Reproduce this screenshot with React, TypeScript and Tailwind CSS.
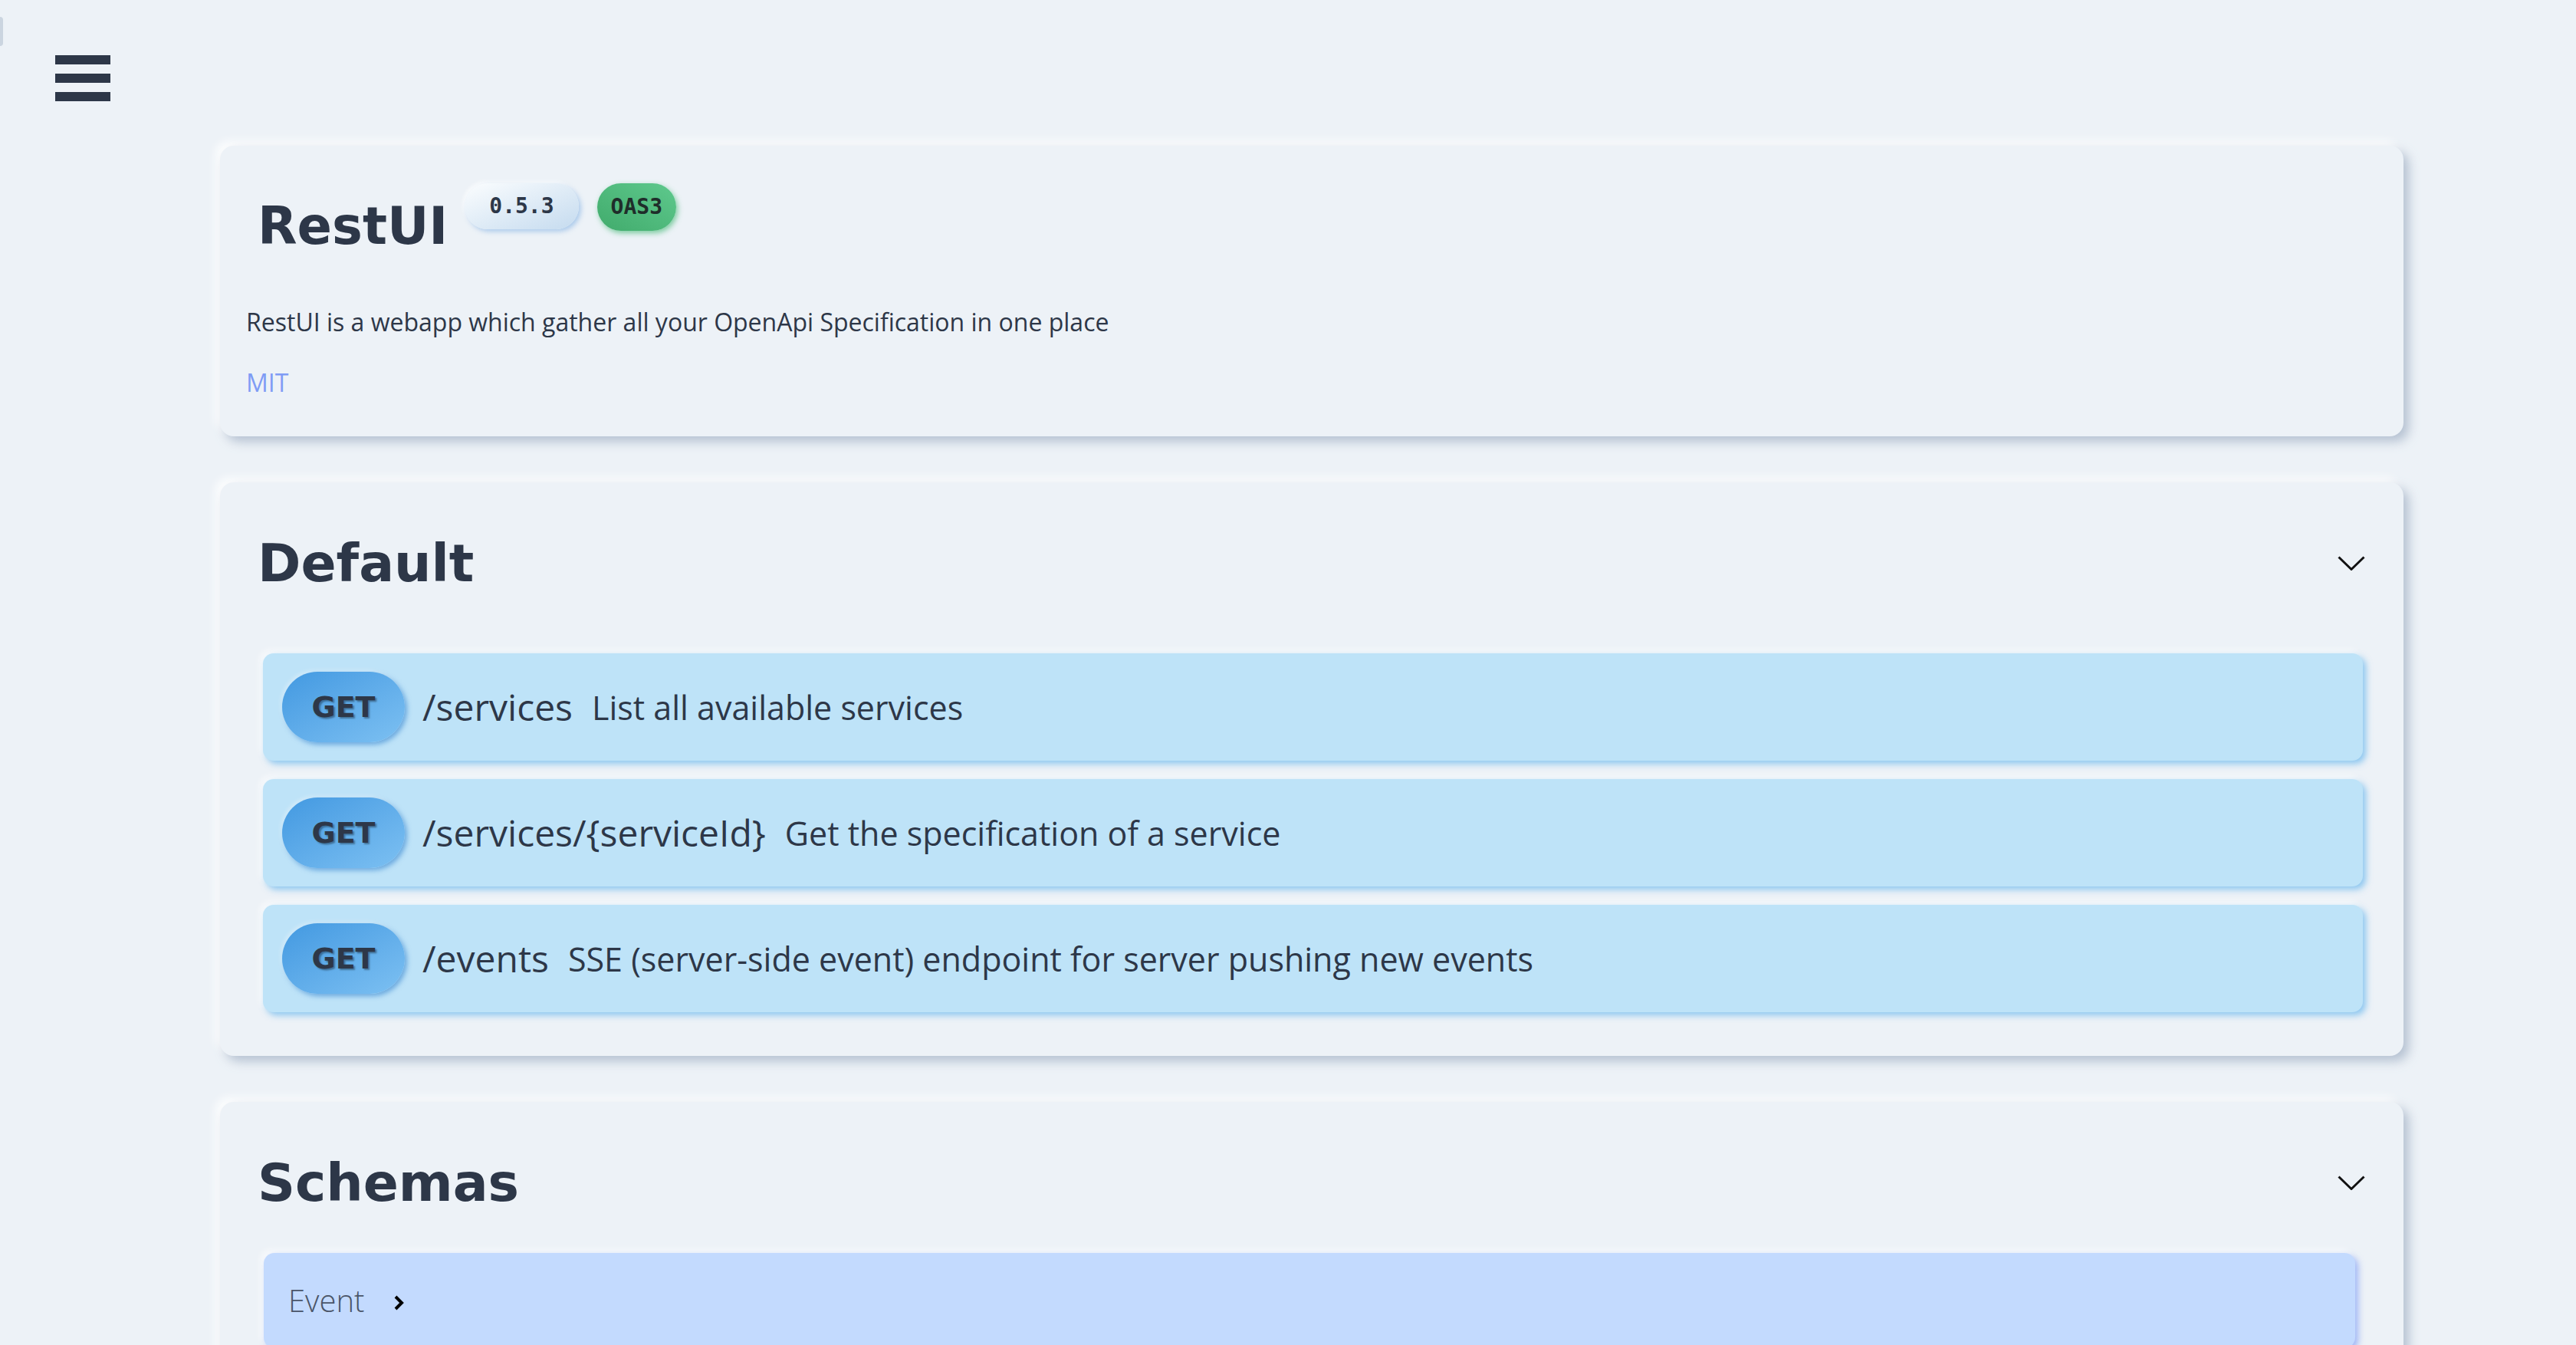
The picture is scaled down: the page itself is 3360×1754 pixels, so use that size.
import React from 'react';

const ENDPOINTS = [
  { method: 'GET', path: '/services', summary: 'List all available services' },
  { method: 'GET', path: '/services/{serviceId}', summary: 'Get the specification of a service' },
  {
    method: 'GET',
    path: '/events',
    summary: 'SSE (server-side event) endpoint for server pushing new events',
  },
];

const SCHEMAS = ['Event'];

const cardClass =
  "rounded-[18px] bg-[#edf2f7] shadow-[7px_7px_14px_rgba(163,177,198,0.75),-6px_-6px_12px_rgba(255,255,255,0.9)]";

function ChevronDown() {
  return (
    <svg width="36" height="20" viewBox="0 0 36 20" fill="none">
      <polyline points="1.5,1.5 18,17.5 34.5,1.5" stroke="#111" strokeWidth="3" strokeLinejoin="round" />
    </svg>
  );
}

function ChevronRight() {
  return (
    <svg width="14" height="20" viewBox="0 0 14 20" fill="none">
      <polyline points="3,2 11,10 3,18" stroke="#000" strokeWidth="4" />
    </svg>
  );
}

function MenuIcon() {
  return (
    <svg width="72" height="60" viewBox="0 0 72 60" fill="#2d3748">
      <rect x="0" y="0" width="72" height="12" />
      <rect x="0" y="24" width="72" height="12" />
      <rect x="0" y="48" width="72" height="12" />
    </svg>
  );
}

function SectionHeader({ title }: { title: string }) {
  return (
    <div className="flex items-center justify-between">
      <h2 className="font-['DejaVu_Sans',sans-serif] text-[68px] font-bold leading-none">{title}</h2>
      <ChevronDown />
    </div>
  );
}

function EndpointRow({ method, path, summary }: { method: string; path: string; summary: string }) {
  return (
    <div className="flex h-[140px] items-center rounded-[14px] bg-[#bee3f8] pl-[25px] shadow-[4px_4px_8px_rgba(99,179,237,0.7),-4px_-4px_8px_rgba(255,255,255,0.7)]">
      <span className="flex h-[92px] w-[160px] shrink-0 items-center justify-center rounded-full bg-gradient-to-br from-[#4299e1] to-[#7cc0f2] font-['DejaVu_Sans',sans-serif] text-[38px] font-bold shadow-[3px_3px_6px_rgba(49,130,206,0.6),-2px_-2px_5px_rgba(255,255,255,0.4)] [text-shadow:2px_2px_2px_rgba(0,0,0,0.35)]">
        {method}
      </span>
      <span className="ml-[23px] text-[48px] leading-none">{path}</span>
      <span className="ml-[25px] text-[43px] leading-none">{summary}</span>
    </div>
  );
}

export default function App() {
  return (
    <div className="relative min-h-screen overflow-hidden bg-[#edf2f7] font-['Open_Sans',sans-serif] text-[#2d3748]">
      <div className="absolute left-0 top-[22px] h-[38px] w-[4px] rounded-r-full bg-[#cbd5e0]" />

      <div className="pl-[72px] pt-[72px]">
        <button className="block">
          <MenuIcon />
        </button>
      </div>

      <main className="ml-[287px] mt-[58px] flex w-[2848px] flex-col gap-[60px] pb-[60px]">
        {/* info */}
        <section className={`${cardClass} px-[34px] pb-[46px] pt-[49px]`}>
          <div className="flex items-start">
            <h1 className="ml-[15px] mt-[23px] font-['DejaVu_Sans',sans-serif] text-[67px] font-bold leading-none">
              RestUI
            </h1>
            <span className="ml-[22px] flex h-[60px] items-center rounded-full bg-gradient-to-br from-[#fbfdfe] to-[#c5dbef] px-[32px] font-['DejaVu_Sans_Mono',monospace] text-[28px] font-bold shadow-[3px_3px_6px_rgba(144,185,230,0.7),-2px_-2px_5px_rgba(255,255,255,0.9)]">
              0.5.3
            </span>
            <span className="ml-[24px] flex h-[62px] items-center rounded-full bg-gradient-to-bl from-[#5ec98d] to-[#41ab6c] px-[18px] font-['DejaVu_Sans_Mono',monospace] text-[28px] font-bold text-[#1f2d2a] shadow-[2px_3px_7px_rgba(72,187,120,0.7)]">
              OAS3
            </span>
          </div>
          <p className="mt-[67px] text-[32px] leading-[48px]">
            RestUI is a webapp which gather all your OpenApi Specification in one place
          </p>
          <a className="mt-[31px] block text-[32px] leading-[48px] text-[#7f9cf5]">MIT</a>
        </section>

        {/* operations */}
        <section className={`${cardClass} pb-[57px] pl-[49px] pr-[50px] pt-[72px]`}>
          <SectionHeader title="Default" />
          <div className="ml-[7px] mr-[3px] mt-[83px] flex flex-col gap-[24px]">
            {ENDPOINTS.map((ep) => (
              <EndpointRow key={ep.path} {...ep} />
            ))}
          </div>
        </section>

        {/* models */}
        <section className={`${cardClass} pb-[60px] pl-[49px] pr-[50px] pt-[72px]`}>
          <SectionHeader title="Schemas" />
          <div className="ml-[8px] mr-[13px] mt-[57px] flex flex-col gap-[24px]">
            {SCHEMAS.map((name) => (
              <div
                key={name}
                className="flex items-center rounded-[14px] bg-[#c3dafe] py-[34px] pl-[32px] shadow-[4px_4px_8px_rgba(127,156,245,0.7),-4px_-4px_8px_rgba(255,255,255,0.7)]"
              >
                <span className="text-[40px] font-light leading-[56px] text-[#4a5568]">{name}</span>
                <span className="ml-[38px] mt-[6px]">
                  <ChevronRight />
                </span>
              </div>
            ))}
          </div>
        </section>
      </main>
    </div>
  );
}
